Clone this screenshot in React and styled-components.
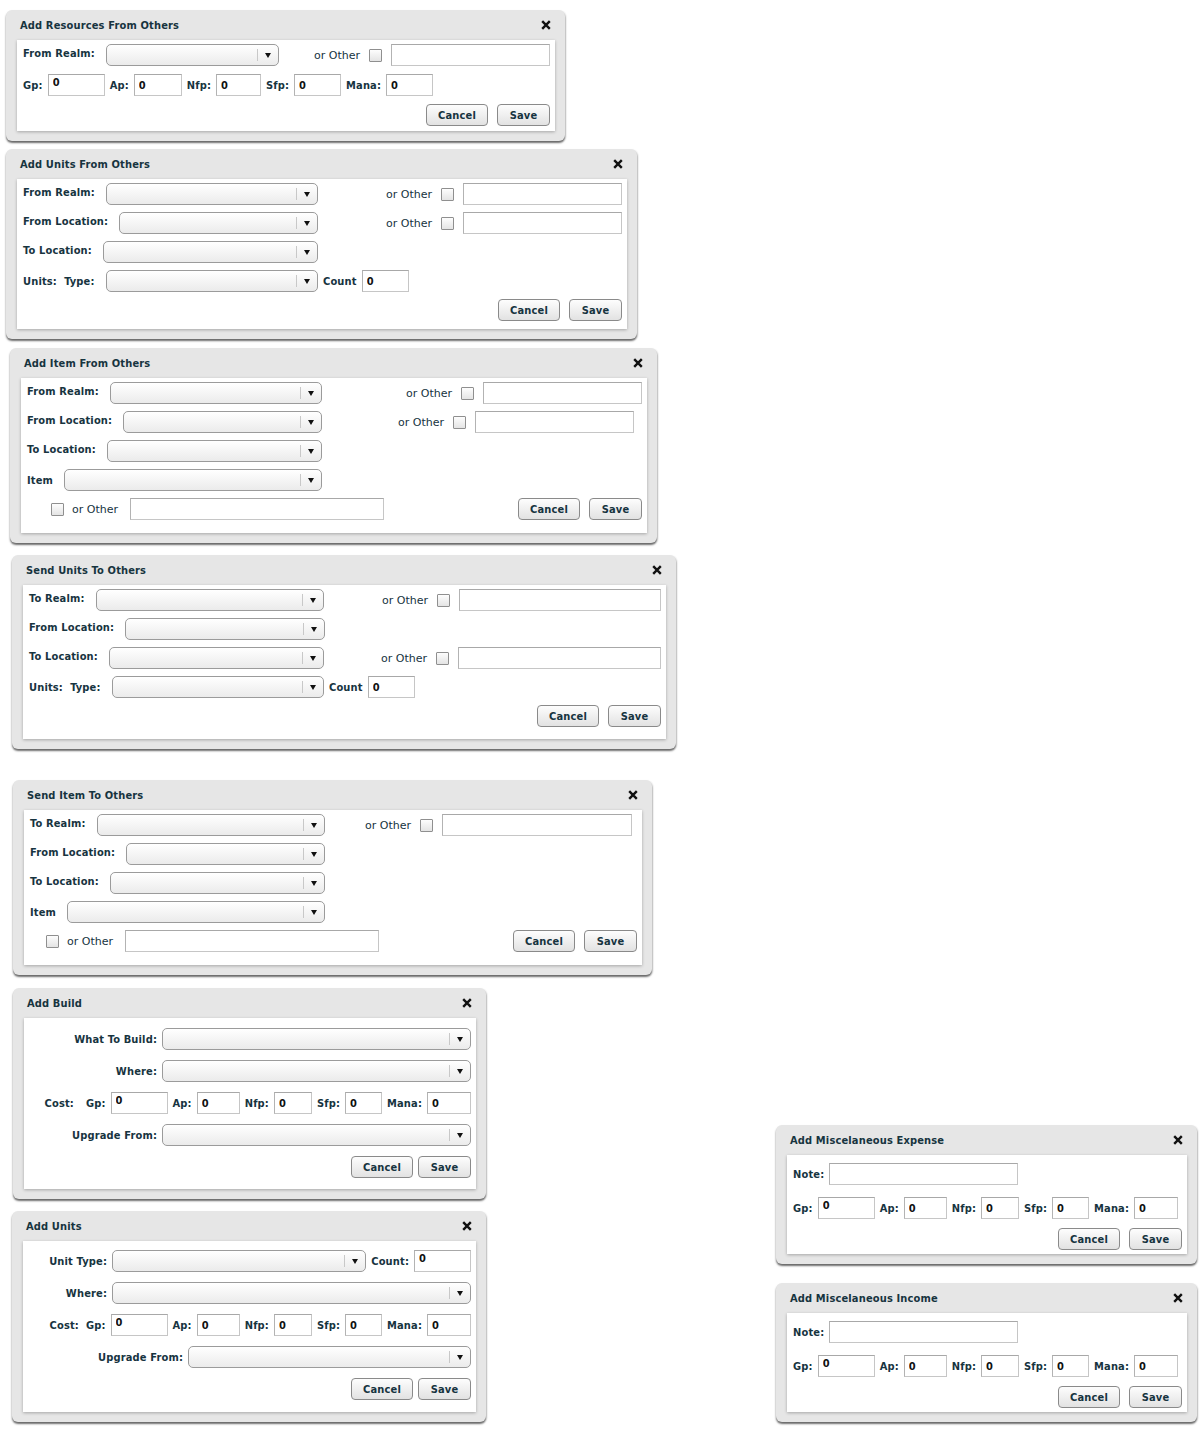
import React from "react";
import styled, { createGlobalStyle } from "styled-components";

const GlobalStyle = createGlobalStyle`
  body {
    margin: 0;
    background: #fff;
    font-family: "DejaVu Sans Condensed", "DejaVu Sans", sans-serif;
    font-size: 11px;
    color: #17343f;
  }
  * { box-sizing: border-box; }
`;

const Page = styled.main`
  width: 1204px;
  display: flex;
  justify-content: space-between;
  align-items: flex-end;
  padding: 0 7px 20px 0;
`;

const Column = styled.div`
  display: flex;
  flex-direction: column;
`;

const Dialog = styled.section`
  width: ${(p) => p.$w}px;
  height: ${(p) => p.$h}px;
  margin: ${(p) => p.$mt || 0}px 0 0 ${(p) => p.$ml || 0}px;
  display: flex;
  flex-direction: column;
  background: #e6e6e6;
  border-radius: 6px;
  box-shadow: 0 2px 2px rgba(0, 0, 0, 0.55), 1px 1px 2px rgba(0, 0, 0, 0.12);
`;

const TitleBar = styled.header`
  height: 30px;
  flex: none;
  display: flex;
  align-items: center;
  justify-content: space-between;
  padding: 0 14px;
`;

const Title = styled.h2`
  margin: 0;
  font-size: 11px;
  font-weight: bold;
  letter-spacing: 0.15px;
`;

const CloseButton = styled.button`
  border: 0;
  background: none;
  padding: 0;
  width: 10px;
  height: 10px;
  display: flex;
`;

const Panel = styled.div`
  flex: 1;
  margin: 0 10px 10px 11px;
  background: #fff;
  box-shadow: 0 1px 3px rgba(0, 0, 0, 0.28);
  padding: ${(p) => p.$pt}px 5px 0 6px;
  display: flex;
  flex-direction: column;
  gap: ${(p) => p.$gap}px;
`;

const Row = styled.div`
  height: 22px;
  flex: none;
  display: flex;
  align-items: center;
  gap: ${(p) => p.$gap ?? 5}px;
  justify-content: ${(p) => p.$justify || "flex-start"};
  margin-top: ${(p) => p.$mt || 0}px;
  padding-left: ${(p) => p.$indent || 0}px;
`;

const Cell = styled.div`
  flex: ${(p) => (p.$w ? "none" : 1)};
  width: ${(p) => (p.$w ? `${p.$w}px` : "auto")};
  display: flex;
  align-items: center;
  gap: ${(p) => p.$gap ?? 11}px;
`;

const Label = styled.label`
  font-weight: bold;
  white-space: nowrap;
  flex: none;
  letter-spacing: 0.15px;
  margin-bottom: ${(p) => (p.$raise ? 4 : 0)}px;
  margin-right: ${(p) => p.$mr || 0}px;
  width: ${(p) => (p.$w ? `${p.$w}px` : "auto")};
  text-align: ${(p) => (p.$w ? "right" : "left")};
`;

const Plain = styled.span`
  white-space: nowrap;
  font-family: "DejaVu Sans", sans-serif;
  font-size: 11px;
  margin: ${(p) => p.$m || 0};
`;

const SelectBox = styled.div`
  flex: 1;
  height: 22px;
  border: 1px solid #9b9b9b;
  border-radius: 5px;
  background: linear-gradient(#ffffff, #ebebeb);
  display: flex;
  justify-content: flex-end;
  align-items: center;
`;

const SelectArrow = styled.span`
  width: 21px;
  height: 12px;
  border-left: 1px solid #c8c8c8;
  display: flex;
  align-items: center;
  justify-content: center;
  &::after {
    content: "";
    border-left: 3.5px solid transparent;
    border-right: 3.5px solid transparent;
    border-top: 5px solid #111;
  }
`;

const TextInput = styled.input.attrs({ type: "text" })`
  width: ${(p) => p.$w}px;
  height: 22px;
  flex: none;
  border: 1px solid #c6c6c6;
  border-top-color: #a8a8a8;
  border-left-color: #b3b3b3;
  padding: 0 4px ${(p) => (p.$high ? 6 : 0)}px;
  font-family: inherit;
  font-size: 11px;
  font-weight: bold;
  color: #111;
  background: #fff;
  outline: none;
`;

const Check = styled.span`
  width: 13px;
  height: 13px;
  flex: none;
  border: 1px solid #8f8f8f;
  border-radius: 1px;
  background: linear-gradient(#fdfdfd, #e4e4e4);
`;

const OtherGroup = styled.div`
  margin-left: auto;
  margin-right: ${(p) => p.$mr || 0}px;
  display: flex;
  align-items: center;
  gap: 9px;
`;

const Buttons = styled.div`
  margin-left: auto;
  display: flex;
  gap: ${(p) => p.$gap ?? 9}px;
`;

const Btn = styled.button`
  width: ${(p) => p.$w}px;
  height: 22px;
  padding: 0;
  border: 1px solid #8a8a8a;
  border-radius: 4px;
  background: linear-gradient(#fdfdfd, #e2e2e2);
  font-family: inherit;
  font-size: 11px;
  font-weight: bold;
  letter-spacing: 0.15px;
  color: #17343f;
`;

const Window = ({ title, w, h, ml, mt, pt = 4, gap = 7, children }) => (
  <Dialog $w={w} $h={h} $ml={ml} $mt={mt}>
    <TitleBar>
      <Title>{title}</Title>
      <CloseButton aria-label="close">
        <svg width="10" height="10" viewBox="0 0 10 10">
          <path d="M1.2 1.2 L8.8 8.8 M8.8 1.2 L1.2 8.8" stroke="#111" strokeWidth="2.4" />
        </svg>
      </CloseButton>
    </TitleBar>
    <Panel $pt={pt} $gap={gap}>
      {children}
    </Panel>
  </Dialog>
);

const Select = () => (
  <SelectBox>
    <SelectArrow />
  </SelectBox>
);

const Other = ({ w, mr }) => (
  <OtherGroup $mr={mr}>
    <Plain>or Other</Plain>
    <Check />
    <TextInput $w={w} />
  </OtherGroup>
);

const SaveCancel = ({ gap }) => (
  <Buttons $gap={gap}>
    <Btn $w={62}>Cancel</Btn>
    <Btn $w={53}>Save</Btn>
  </Buttons>
);

const Resources = ({ widths }) =>
  ["Gp:", "Ap:", "Nfp:", "Sfp:", "Mana:"].map((name, i) => (
    <React.Fragment key={name}>
      <Label>{name}</Label>
      <TextInput $w={widths[i]} $high={i === 0} defaultValue="0" />
    </React.Fragment>
  ));

const SelectField = ({ label, w, raise, labelW }) => (
  <Cell $w={w} $gap={labelW ? 5 : 11}>
    <Label $raise={raise} $w={labelW}>
      {label}
    </Label>
    <Select />
  </Cell>
);

const OtherLine = ({ indent, w }) => (
  <Row $gap={0} $indent={indent}>
    <Check />
    <Plain $m="0 12px 0 8px">or Other</Plain>
    <TextInput $w={w} />
    <SaveCancel />
  </Row>
);

const MiscWindow = ({ title, mt }) => (
  <Window title={title} w={421} h={139} mt={mt} pt={8} gap={9}>
    <Row>
      <Label>Note:</Label>
      <TextInput $w={189} />
    </Row>
    <Row $mt={3}>
      <Resources widths={[57, 43, 38, 37, 44]} />
    </Row>
    <Row>
      <SaveCancel />
    </Row>
  </Window>
);

export default function App() {
  return (
    <>
      <GlobalStyle />
      <Page>
        <Column>
          <Window title="Add Resources From Others" w={559} h={131} ml={6} mt={10} gap={8}>
            <Row>
              <SelectField label="From Realm:" w={256} raise />
              <Other w={159} />
            </Row>
            <Row>
              <Resources widths={[57, 48, 45, 47, 47]} />
            </Row>
            <Row>
              <SaveCancel />
            </Row>
          </Window>

          <Window title="Add Units From Others" w={631} h={190} ml={6} mt={8}>
            <Row>
              <SelectField label="From Realm:" w={295} raise />
              <Other w={159} />
            </Row>
            <Row>
              <SelectField label="From Location:" w={295} raise />
              <Other w={159} />
            </Row>
            <Row>
              <SelectField label="To Location:" w={295} raise />
            </Row>
            <Row>
              <SelectField label={"Units:\u00a0 Type:"} w={295} />
              <Label>Count</Label>
              <TextInput $w={47} defaultValue="0" />
            </Row>
            <Row>
              <SaveCancel />
            </Row>
          </Window>

          <Window title="Add Item From Others" w={647} h={195} ml={10} mt={9}>
            <Row>
              <SelectField label="From Realm:" w={295} raise />
              <Other w={159} />
            </Row>
            <Row>
              <SelectField label="From Location:" w={295} raise />
              <Other w={159} mr={8} />
            </Row>
            <Row>
              <SelectField label="To Location:" w={295} raise />
            </Row>
            <Row>
              <SelectField label="Item" w={295} />
            </Row>
            <OtherLine indent={24} w={254} />
          </Window>

          <Window title="Send Units To Others" w={664} h={194} ml={12} mt={12}>
            <Row>
              <SelectField label="To Realm:" w={295} raise />
              <Other w={202} />
            </Row>
            <Row>
              <SelectField label="From Location:" w={296} raise />
            </Row>
            <Row>
              <SelectField label="To Location:" w={295} raise />
              <Other w={203} />
            </Row>
            <Row>
              <SelectField label={"Units:\u00a0 Type:"} w={295} />
              <Label>Count</Label>
              <TextInput $w={47} defaultValue="0" />
            </Row>
            <Row>
              <SaveCancel />
            </Row>
          </Window>

          <Window title="Send Item To Others" w={639} h={195} ml={13} mt={31}>
            <Row>
              <SelectField label="To Realm:" w={295} raise />
              <Other w={190} mr={5} />
            </Row>
            <Row>
              <SelectField label="From Location:" w={295} raise />
            </Row>
            <Row>
              <SelectField label="To Location:" w={295} raise />
            </Row>
            <Row>
              <SelectField label="Item" w={295} />
            </Row>
            <OtherLine indent={16} w={254} />
          </Window>

          <Window title="Add Build" w={473} h={211} ml={13} mt={13} pt={10} gap={10}>
            <Row>
              <SelectField label="What To Build:" labelW={127} />
            </Row>
            <Row>
              <SelectField label="Where:" labelW={127} />
            </Row>
            <Row $justify="flex-end">
              <Label $mr={7}>Cost:</Label>
              <Resources widths={[57, 43, 38, 37, 44]} />
            </Row>
            <Row>
              <SelectField label="Upgrade From:" labelW={127} />
            </Row>
            <Row>
              <SaveCancel gap={5} />
            </Row>
          </Window>

          <Window title="Add Units" w={474} h={211} ml={12} mt={12} pt={9} gap={10}>
            <Row>
              <SelectField label="Unit Type:" labelW={78} />
              <Label>Count:</Label>
              <TextInput $w={57} $high defaultValue="0" />
            </Row>
            <Row>
              <SelectField label="Where:" labelW={78} />
            </Row>
            <Row $justify="flex-end">
              <Label $mr={2}>Cost:</Label>
              <Resources widths={[57, 43, 38, 37, 44]} />
            </Row>
            <Row>
              <SelectField label="Upgrade From:" labelW={154} />
            </Row>
            <Row>
              <SaveCancel gap={5} />
            </Row>
          </Window>
        </Column>

        <Column>
          <MiscWindow title="Add Miscelaneous Expense" />
          <MiscWindow title="Add Miscelaneous Income" mt={19} />
        </Column>
      </Page>
    </>
  );
}
